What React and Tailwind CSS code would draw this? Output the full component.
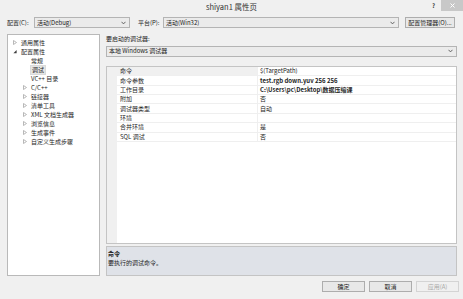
import React from "react";

const font = { fontFamily: '"Noto Sans CJK SC", "Noto Sans", sans-serif' };

function Chevron({ className = "" }) {
  return (
    <svg width="5" height="4" viewBox="0 0 5 4" className={className}>
      <path d="M0.5 0.8 L2.5 2.9 L4.5 0.8" fill="none" stroke="#555" strokeWidth="0.9" />
    </svg>
  );
}

function Collapsed() {
  return (
    <svg width="4" height="5" viewBox="0 0 4 5" className="shrink-0">
      <path d="M0.5 0.5 L3.5 2.5 L0.5 4.5 Z" fill="none" stroke="#a6a6a6" strokeWidth="0.8" />
    </svg>
  );
}

function Expanded() {
  return (
    <svg width="4" height="5" viewBox="0 0 4 5" className="shrink-0">
      <path d="M3.6 1 L3.6 4.2 L0.4 4.2 Z" fill="#3c3c3c" />
    </svg>
  );
}

function Combo({ text, className = "" }) {
  return (
    <div
      className={`h-[11px] flex items-center justify-between border border-[#b4b4b4] bg-[#ebebeb] pl-[2px] pr-[3px] ${className}`}
    >
      <span className="text-[6px] leading-none text-[#222]">{text}</span>
      <Chevron />
    </div>
  );
}

function Button({ children, disabled, className = "" }) {
  return (
    <div
      className={`h-[11px] flex items-center justify-center border text-[6px] leading-none ${
        disabled ? "border-[#d4d4d4] bg-[#f0f0f0] text-[#a8a8a8]" : "border-[#adadad] bg-[#e8e8e8] text-[#222]"
      } ${className}`}
    >
      {children}
    </div>
  );
}

const tree = [
  { label: "通用属性", level: 0, icon: "c" },
  { label: "配置属性", level: 0, icon: "e" },
  { label: "常规", level: 1 },
  { label: "调试", level: 1, selected: true },
  { label: "VC++ 目录", level: 1 },
  { label: "C/C++", level: 1, icon: "c" },
  { label: "链接器", level: 1, icon: "c" },
  { label: "清单工具", level: 1, icon: "c" },
  { label: "XML 文档生成器", level: 1, icon: "c" },
  { label: "浏览信息", level: 1, icon: "c" },
  { label: "生成事件", level: 1, icon: "c" },
  { label: "自定义生成步骤", level: 1, icon: "c" },
];

const rows = [
  ["命令", "$(TargetPath)", false],
  ["命令参数", "test.rgb down.yuv 256 256", true],
  ["工作目录", "C:\\Users\\pc\\Desktop\\数据压缩课", true],
  ["附加", "否", false],
  ["调试器类型", "自动", false],
  ["环境", "", false],
  ["合并环境", "是", false],
  ["SQL 调试", "否", false],
];

export default function App() {
  return (
    <div className="w-[463px] h-[299px] bg-[#f0f0f0] flex flex-col text-[#1e1e1e] overflow-hidden" style={font}>
      {/* title bar */}
      <div className="h-[14px] flex items-start shrink-0">
        <div className="w-[40px]" />
        <div className="flex-1 flex justify-center pt-[2px] text-[7.5px] leading-[9px] text-[#333]">shiyan1 属性页</div>
        <div className="w-[40px] flex items-start justify-end">
          <span className="text-[6px] leading-none font-bold text-[#444] mt-[3px] mr-[6px]">?</span>
          <div className="w-[22px] h-[11px] bg-[#c8c8c8] flex items-center justify-center">
            <svg width="5" height="5" viewBox="0 0 5 5">
              <path d="M0.5 0.5 L4.5 4.5 M4.5 0.5 L0.5 4.5" stroke="#fff" strokeWidth="1" />
            </svg>
          </div>
        </div>
      </div>

      {/* config row */}
      <div className="h-[11px] mt-[3px] flex items-center pl-[7px] shrink-0">
        <span className="text-[6px] leading-none w-[27px]">配置(C):</span>
        <Combo text="活动(Debug)" className="w-[96px]" />
        <span className="text-[6px] leading-none ml-[8px] w-[25px]">平台(P):</span>
        <Combo text="活动(Win32)" className="w-[236px]" />
        <Button className="w-[50px] ml-[6px]">配置管理器(O)...</Button>
      </div>

      {/* main */}
      <div className="flex mt-[6px] pl-[7px] gap-[6px] h-[242px] shrink-0">
        {/* tree */}
        <div className="w-[93px] border border-[#b9b9b9] bg-white pt-[3px]">
          {tree.map((t, i) => (
            <div
              key={i}
              className={`h-[9px] flex items-center ${t.level === 0 ? "pl-[5px]" : "pl-[15px]"}`}
            >
              <div className="w-[7px] flex items-center">
                {t.icon === "c" ? <Collapsed /> : t.icon === "e" ? <Expanded /> : null}
              </div>
              <span
                className={`text-[6px] leading-[8px] px-[1px] ${
                  t.selected ? "bg-[#e5e5e5] border border-[#dadada]" : ""
                } ${t.level === 1 && !t.icon ? "" : ""}`}
              >
                {t.label}
              </span>
            </div>
          ))}
        </div>

        {/* right side */}
        <div className="w-[351px] flex flex-col">
          <div className="text-[6px] leading-[8px] mt-[1px]">要启动的调试器:</div>
          <Combo text="本地 Windows 调试器" className="mt-[3px] w-full" />
          <div className="mt-[9px] h-[180px] border border-[#c4c4c4] bg-white flex flex-col">
            {rows.map(([n, v, b], i) => (
              <div key={i} className="h-[9.4px] flex">
                <div className="w-[10px] bg-[#f0f0f0]" />
                <div
                  className={`w-[140px] flex items-center pl-[3px] text-[6px] leading-none border-b border-[#efefef] ${
                    i === 0 ? "bg-[#f0f0f0]" : ""
                  }`}
                >
                  {n}
                </div>
                <div
                  className={`flex-1 flex items-center pl-[2px] text-[6px] leading-none border-b border-l border-[#efefef] ${
                    b ? "font-bold" : ""
                  }`}
                >
                  {v}
                </div>
              </div>
            ))}
            <div className="flex-1 flex">
              <div className="w-[10px] bg-[#f0f0f0]" />
            </div>
          </div>
          <div className="mt-[2px] h-[30px] border border-[#c4c4c4] bg-[#dfe2e8] px-[1px] pt-[2px]">
            <div className="text-[6px] leading-[9px] font-bold">命令</div>
            <div className="text-[6px] leading-[9px]">要执行的调试命令。</div>
          </div>
        </div>
      </div>

      {/* bottom buttons */}
      <div className="flex justify-end gap-[4px] pr-[4px] mt-[5px]">
        <Button className="w-[43px]">确定</Button>
        <Button className="w-[43px]">取消</Button>
        <Button className="w-[43px]" disabled>应用(A)</Button>
      </div>
    </div>
  );
}
